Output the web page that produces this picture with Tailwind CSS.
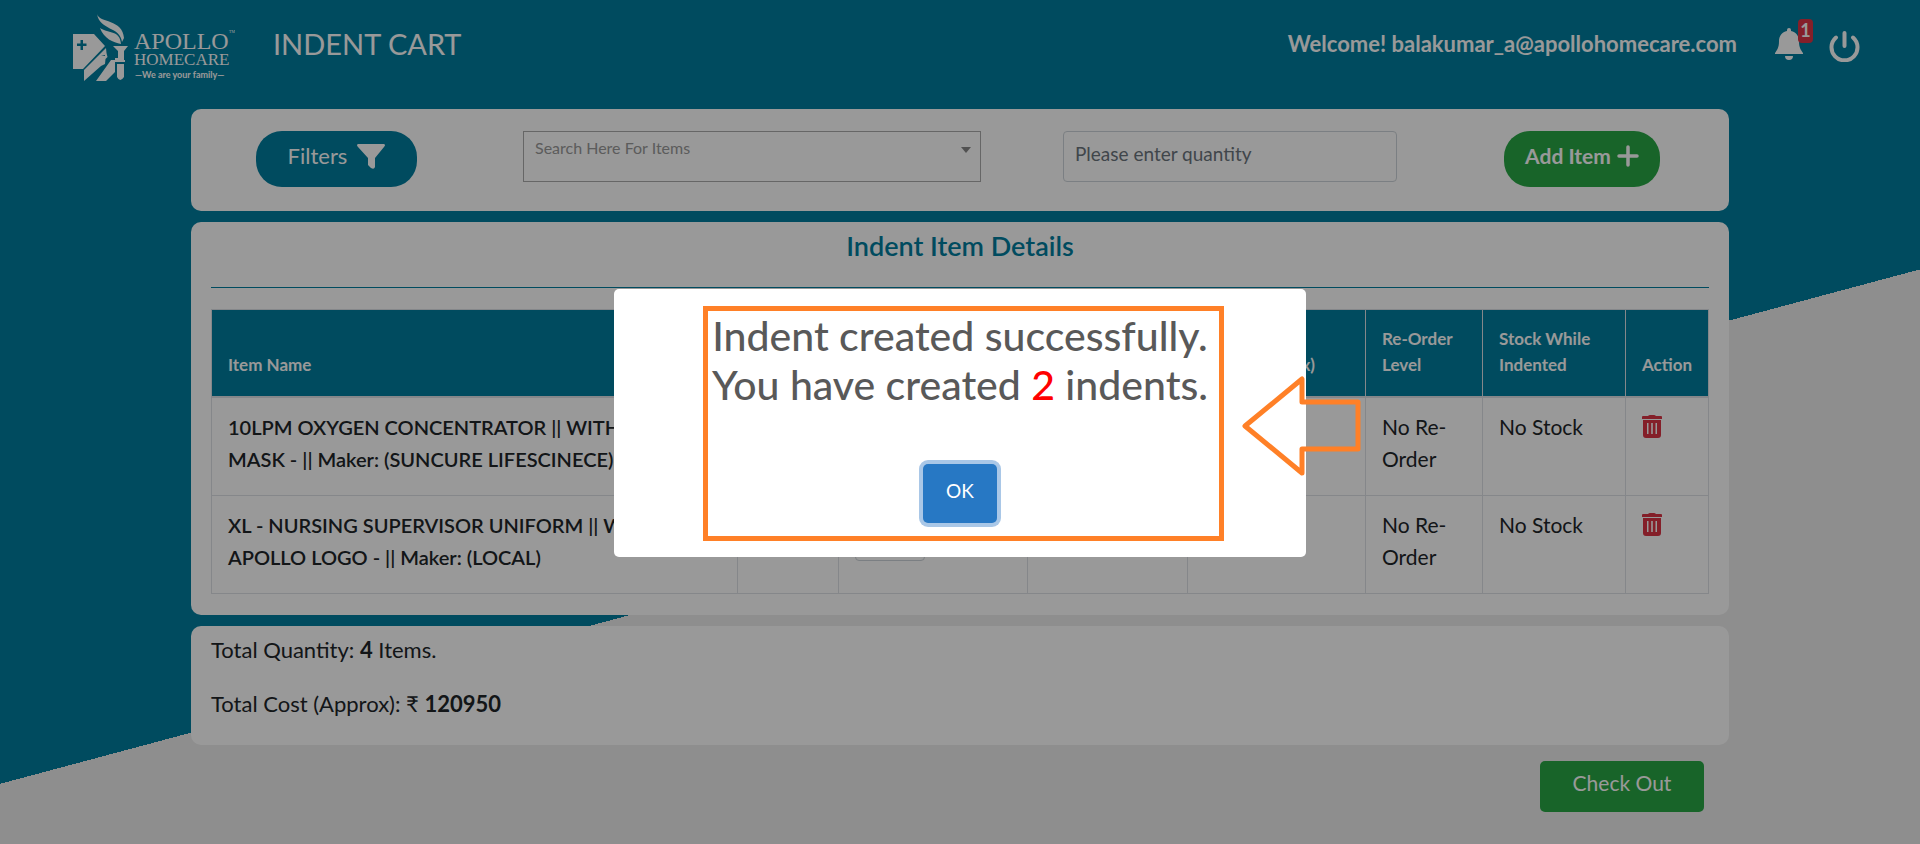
<!DOCTYPE html>
<html lang="en">
<head>
<meta charset="utf-8">
<title>Indent Cart</title>
<script src="https://cdn.jsdelivr.net/npm/@tailwindcss/browser@4"></script>
</head>
<body class="min-h-screen bg-[linear-gradient(165deg,#007d9e_57.7%,#ededed_57.7%)] font-['Lato',sans-serif] text-[21px] leading-8 text-[#212529]">
<header class="flex h-[109px] items-start pl-[73px] pr-[60px] text-white">
  <a href="#" aria-label="Apollo Homecare" class="mt-3.5 block">
    <svg width="162" height="68" viewBox="0 0 162 68" fill="#fff" aria-hidden="true">
      <path fill-rule="evenodd" d="M0 20H21L32 32L10 55H0ZM7.500 26V29.500H4V32H7.500V36H10V32H13.500V29.500H10V26Z"/>
      <path fill-rule="evenodd" d="M33 34L33.500 39L34.500 43L32.500 45L32 50L28 52L11 67V56ZM28 41L32 42V41Z"/>
      <path d="M23 67L38 46H42V44H45V46H52V48H42V58L33 67Z"/>
      <path d="M24 0C26 9 50 5 51 24L49 28C47 12 27 17 24 0Z"/>
      <path d="M27 14C36 20 47 16 48 30C40 28 31 25 27 14Z"/>
      <path d="M40 32H55L51 37V46H45V37ZM44 50H51V63Q47 69 44 63Z"/>
      <g font-family="'Liberation Serif',serif">
        <text x="61" y="35" font-size="24">APOLLO</text>
        <text x="61" y="51" font-size="17">HOMECARE</text>
        <text x="156" y="19" font-size="4">TM</text>
      </g>
      <text x="62" y="64" font-size="9" font-weight="700" font-family="Lato,sans-serif">—We are your family—</text>
    </svg>
  </a>
  <h1 class="ml-[38px] mt-6 text-[29px] leading-10">INDENT CART</h1>
  <div class="ml-auto mt-7 flex items-start">
    <p class="text-[22px] font-bold">Welcome! balakumar_a@apollohomecare.com</p>
    <button type="button" aria-label="Notifications" class="relative ml-[38px] block">
      <svg width="28" height="32" viewBox="0 0 28 32" fill="#fff"><path d="M12 2a2 2 0 0 1 4 0v1c5 1 8 5 8 10 0 7 2 9 4 12v1H0v-1c2-3 4-5 4-12C4 8 7 4 12 3ZM10 28h8a4 4 0 0 1-8 0Z"/></svg>
      <span class="absolute -top-[9px] left-[23px] h-6 w-[15px] rounded bg-[#dc3545] text-center text-lg leading-[22px] font-bold">1</span>
    </button>
    <button type="button" aria-label="Log out" class="ml-[26px] mt-0.5 block">
      <svg width="31" height="32" viewBox="0 0 31 32" fill="none" stroke="#fff" stroke-width="4" stroke-linecap="round"><path d="M15.500 3V16M7 7.500A13 13 0 1 0 24 7.500"/></svg>
    </button>
  </div>
</header>
<main class="mx-[191px] flex flex-col gap-[11px]">
  <form class="flex h-[102px] items-start rounded-[10px] bg-white pl-[65px] pr-[69px] pt-[22px]">
    <button type="button" class="flex h-14 w-[161px] items-center justify-center gap-2.5 rounded-[26px] bg-[#007d9e] pb-1.5 text-[22px] text-white">Filters
      <svg width="28" height="25" viewBox="0 0 28 25" fill="#fff"><path d="M1 0H27Q29 1 27 3L18 14V23Q17 26 14 24L11 21V14L1 3Q-1 1 1 0Z"/></svg>
    </button>
    <div class="relative ml-[106px] h-[51px] w-[458px]">
      <select aria-label="Search items" class="block size-full appearance-none border border-[#aaa] bg-white px-[11px] pb-[18px] text-base text-[#999]"><option>Search Here For Items</option></select>
      <svg class="pointer-events-none absolute right-2.5 top-4" width="10" height="6" viewBox="0 0 10 6" fill="#888"><path d="M0 0H10L5 6Z"/></svg>
    </div>
    <input type="text" aria-label="Quantity" placeholder="Please enter quantity" class="ml-[82px] h-[51px] w-[334px] rounded border border-[#ced4da] px-[11px] pb-1.5 text-[19px] placeholder:text-[#6c757d]">
    <button type="submit" class="ml-auto flex h-14 w-[156px] items-center justify-center gap-1.5 rounded-[26px] bg-[#28a745] pb-1.5 text-[21px] font-bold text-white">Add Item
      <svg width="22" height="22" viewBox="0 0 22 22" stroke="#fff" stroke-width="3.500" stroke-linecap="round"><path d="M11 2V20M2 11H20"/></svg>
    </button>
  </form>
  <section class="rounded-[10px] bg-white px-5 pb-[21px] pt-2">
    <h2 class="border-b border-[#007d9e] pb-[25px] text-center text-[27px] leading-8 font-semibold text-[#007d9e]">Indent Item Details</h2>
    <table class="mt-[21px] w-full table-fixed border-collapse border border-[#dee2e6] text-left">
      <colgroup><col><col class="w-[101px]"><col class="w-[189px]"><col class="w-[160px]"><col class="w-[178px]"><col class="w-[117px]"><col class="w-[143px]"><col class="w-[83px]"></colgroup>
      <thead class="bg-[#007d9e] text-[17px] leading-[26px] text-white">
        <tr class="h-[87px] align-bottom [&>th]:border [&>th]:border-b-2 [&>th]:border-[#dee2e6] [&>th]:px-4 [&>th]:pt-3.5 [&>th]:pb-[18px]">
          <th>Item Name</th><th></th><th></th><th></th><th>Value (Approx)</th><th>Re-Order Level</th><th>Stock While Indented</th><th>Action</th>
        </tr>
      </thead>
      <tbody class="align-top [&_td]:border [&_td]:border-[#dee2e6] [&_td]:px-4 [&_td]:pb-5 [&_td]:pt-[13px]">
        <tr>
          <td class="text-xl leading-8 font-semibold">10LPM OXYGEN CONCENTRATOR || WITH<br>MASK - || Maker: (SUNCURE LIFESCINECE)</td><td></td>
          <td><input type="text" aria-label="Quantity of item 1" class="mt-[3px] block h-[49px] w-[70px] rounded border border-[#ced4da]"></td><td></td><td></td>
          <td>No Re-Order</td><td>No Stock</td>
          <td><button type="button" aria-label="Delete item 1" class="mt-1 block"><svg width="20" height="23" viewBox="0 0 20 23" fill="#dc3545"><path fill-rule="evenodd" d="M6 1Q7 0 8 0H12Q13 0 14 1H19Q20 1 20 2V4H0V2Q0 1 1 1ZM1 5H19V20Q19 23 16 23H4Q1 23 1 20ZM5 8V19H6.500V8ZM9.200 8V19H10.800V8ZM13.500 8V19H15V8Z"/></svg></button></td>
        </tr>
        <tr>
          <td class="text-xl leading-8 font-semibold">XL - NURSING SUPERVISOR UNIFORM || WITH APOLLO LOGO - || Maker: (LOCAL)</td><td></td>
          <td><input type="text" aria-label="Quantity of item 2" class="mt-[3px] block h-[49px] w-[70px] rounded border border-[#ced4da]"></td><td></td><td></td>
          <td>No Re-Order</td><td>No Stock</td>
          <td><button type="button" aria-label="Delete item 2" class="mt-1 block"><svg width="20" height="23" viewBox="0 0 20 23" fill="#dc3545"><path fill-rule="evenodd" d="M6 1Q7 0 8 0H12Q13 0 14 1H19Q20 1 20 2V4H0V2Q0 1 1 1ZM1 5H19V20Q19 23 16 23H4Q1 23 1 20ZM5 8V19H6.500V8ZM9.200 8V19H10.800V8ZM13.500 8V19H15V8Z"/></svg></button></td>
        </tr>
      </tbody>
    </table>
  </section>
  <section class="rounded-[10px] bg-white px-5 pb-[25px] pt-2 text-[22px] leading-8">
    <p>Total Quantity: <b>4</b> Items.</p>
    <p class="mt-[22px]">Total Cost (Approx): ₹ <b>120950</b></p>
  </section>
  <button type="button" class="mr-[25px] mt-[5px] h-[51px] w-[164px] self-end rounded-[5px] bg-[#28a745] pb-1.5 text-white">Check Out</button>
</main>
<div class="fixed inset-0 flex items-center justify-center bg-black/40 pt-0.5">
  <div role="dialog" aria-modal="true" aria-labelledby="msg" class="relative flex h-[268px] w-[692px] flex-col items-center rounded-[5px] bg-white pt-[22px]">
    <h2 id="msg" class="text-center text-[41px] leading-[49px] font-medium whitespace-nowrap text-[#595959]">Indent created successfully.<br>You have created <span class="text-[#f00]">2</span> indents.</h2>
    <button type="button" class="mt-[55px] h-[59px] w-[74px] rounded-[5px] bg-[#2778c4] pb-1.5 text-[19px] text-white ring-4 ring-[#a9c7e7]">OK</button>
    <div class="pointer-events-none absolute left-[89px] top-[17px] h-[235px] w-[521px] border-[5px] border-[#ff8027]"></div>
    <svg class="absolute left-[627px] top-[84px]" width="120" height="106" viewBox="0 0 120 106" fill="none" stroke="#ff8027" stroke-width="5" stroke-linejoin="round" aria-hidden="true"><path d="M4 53L61 6V29H117V76H61V100Z"/></svg>
  </div>
</div>
</body>
</html>
